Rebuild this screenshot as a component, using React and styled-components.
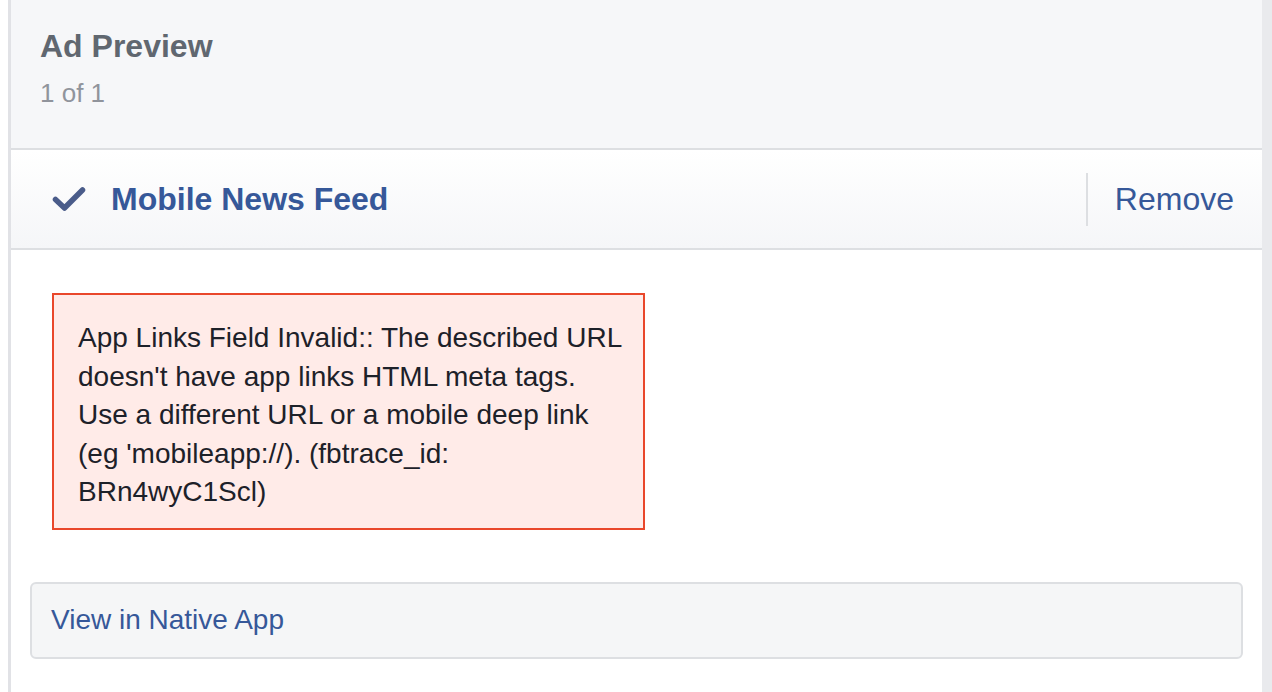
import React from "react";
import styled, { createGlobalStyle } from "styled-components";

const Global = createGlobalStyle`
  html, body { margin: 0; padding: 0; background: #fff; }
  body { font-family: "Liberation Sans", Arial, Helvetica, sans-serif; -webkit-font-smoothing: antialiased; }
  #root { height: 692px; }
`;

const Page = styled.div`
  display: flex;
  height: 692px;
  padding-left: 8px;
  box-sizing: border-box;
  background: #fff;
  overflow: hidden;
`;

const Panel = styled.div`
  flex: 1;
  display: flex;
  flex-direction: column;
  border-left: 3px solid #e1e2e6;
  background: #fff;
  min-width: 0;
`;

const Strip = styled.div`
  width: 10px;
  flex: none;
  background: #e9eaed;
`;

const Header = styled.div`
  background: #f6f7f9;
  border-bottom: 2px solid #dddfe2;
  padding: 30px 29px 42px;
  display: flex;
  flex-direction: column;
  gap: 18px;
`;

const Title = styled.div`
  font-size: 32px;
  line-height: 32px;
  font-weight: bold;
  color: #606770;
`;

const Sub = styled.div`
  font-size: 26px;
  line-height: 26px;
  color: #90949c;
`;

const PlacementRow = styled.div`
  height: 98px;
  display: flex;
  align-items: center;
  background: linear-gradient(#ffffff, #f5f6f8);
  border-bottom: 2px solid #dddfe2;
  padding: 0 28px 0 41px;
`;

const Check = styled.svg`
  width: 34px;
  height: 26px;
  flex: none;
  margin-right: 25px;
`;

const PlacementName = styled.div`
  flex: 1;
  font-size: 32px;
  font-weight: bold;
  color: #365899;
  line-height: 1;
`;

const Divider = styled.div`
  width: 2px;
  height: 53px;
  background: #dddfe2;
  margin-right: 27px;
`;

const LinkText = styled.a`
  font-size: ${(p) => p.$size || 28}px;
  color: #365899;
  text-decoration: none;
  line-height: 1;
  cursor: pointer;
`;

const Body = styled.div`
  flex: 1;
  padding: 43px 19px 0;
  display: flex;
  flex-direction: column;
  align-items: flex-start;
`;

const ErrorBox = styled.div`
  margin-left: 22px;
  width: 593px;
  box-sizing: border-box;
  border: 2px solid #e9472b;
  background: #ffebe8;
  padding: 24px 16px 16px 24px;
  font-size: 28px;
  line-height: 38.5px;
  color: #1d2129;
`;

const NativeBox = styled.div`
  margin-top: 52px;
  align-self: stretch;
  height: 77px;
  box-sizing: border-box;
  border: 2px solid #dddfe2;
  border-radius: 6px;
  background: #f5f6f7;
  display: flex;
  align-items: center;
  padding: 0 19px;
`;

export default function App() {
  return (
    <>
      <Global />
      <Page>
        <Panel>
          <Header>
            <Title>Ad Preview</Title>
            <Sub>1 of 1</Sub>
          </Header>
          <PlacementRow>
            <Check viewBox="0 0 34 26">
              <path
                d="M3.5 13.5 L12.5 22 L30.5 4"
                fill="none"
                stroke="#4a5c8a"
                strokeWidth="5.5"
                strokeLinecap="round"
                strokeLinejoin="round"
              />
            </Check>
            <PlacementName>Mobile News Feed</PlacementName>
            <Divider />
            <LinkText $size={32}>Remove</LinkText>
          </PlacementRow>
          <Body>
            <ErrorBox>
              App Links Field Invalid:: The described URL doesn't have app links
              HTML meta tags. Use a different URL or a mobile deep link (eg
              'mobileapp://). (fbtrace_id: BRn4wyC1Scl)
            </ErrorBox>
            <NativeBox>
              <LinkText $size={28}>View in Native App</LinkText>
            </NativeBox>
          </Body>
        </Panel>
        <Strip />
      </Page>
    </>
  );
}
